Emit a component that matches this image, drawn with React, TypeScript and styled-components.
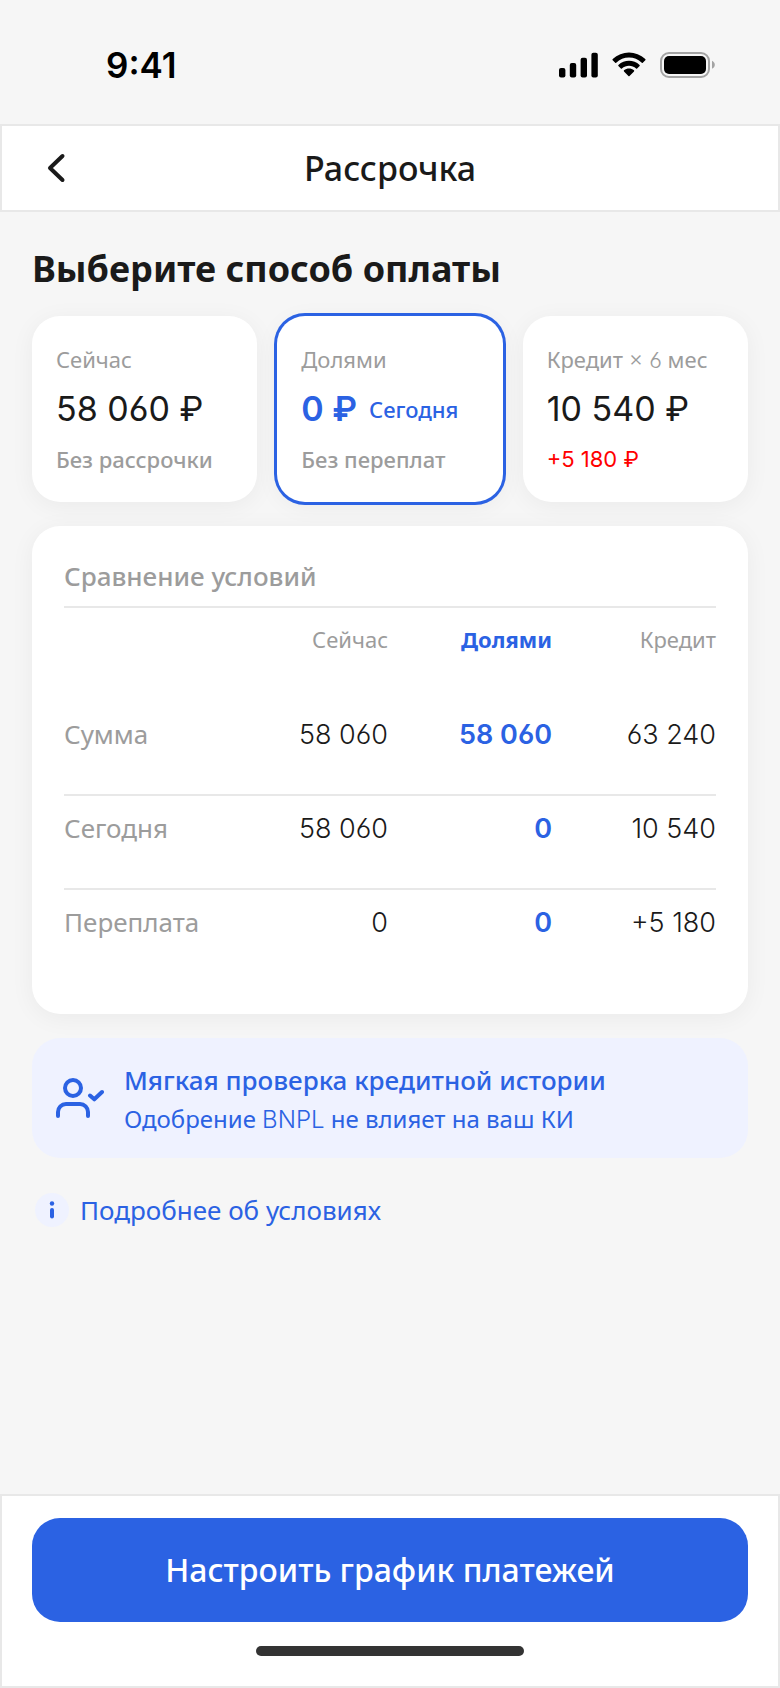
import React, { useState } from 'react';
import styled, { createGlobalStyle } from 'styled-components';

const color = {
  page: '#f6f6f6',
  surface: '#ffffff',
  line: '#e8e8e8',
  text: '#1a1a1a',
  muted: '#9c9c9c',
  accent: '#2b62e3',
  accentSoft: '#eff2ff',
  danger: '#ff0000',
};

const textFont = "'Noto Sans', 'Open Sans', sans-serif";
const numberFont = "Inter, 'Noto Sans', sans-serif";

const GlobalStyle = createGlobalStyle`
  * { box-sizing: border-box; }
  body {
    margin: 0;
    background: ${color.page};
    color: ${color.text};
    font-family: ${textFont};
  }
`;

const Screen = styled.div`
  display: flex;
  flex-direction: column;
  min-height: 100vh;
`;

const StatusBar = styled.div`
  display: flex;
  align-items: center;
  justify-content: space-between;
  padding: 44px 64px 38px 106px;
  color: #000;
`;

const Clock = styled.time`
  font: 600 35px/42px ${numberFont};
`;

const StatusIcons = styled.div`
  display: flex;
  align-items: center;
  gap: 14px;

  svg { display: block; }
`;

const Header = styled.header`
  display: grid;
  grid-template-columns: 48px 1fr 48px;
  align-items: center;
  height: 88px;
  padding: 0 30px;
  background: ${color.surface};
  border: 2px solid ${color.line};
`;

const BackButton = styled.button`
  display: flex;
  align-items: center;
  justify-content: center;
  width: 48px;
  height: 48px;
  padding: 0;
  border: 0;
  background: none;
  color: ${color.text};
  cursor: pointer;
`;

const Title = styled.h1`
  margin: 0;
  font-size: 34px;
  line-height: 48px;
  font-weight: 500;
  text-align: center;
`;

const Content = styled.main`
  flex: 1;
  display: flex;
  flex-direction: column;
  gap: 24px;
  padding: 32px;
`;

const PlanSection = styled.section`
  display: flex;
  flex-direction: column;
  gap: 22px;
`;

const SectionTitle = styled.h2`
  margin: 0;
  font-size: 36px;
  line-height: 50px;
  font-weight: 700;
`;

const Options = styled.div`
  display: grid;
  grid-template-columns: repeat(3, minmax(0, 1fr));
  gap: 20px;
`;

const OptionCard = styled.label<{ $selected: boolean }>`
  display: flex;
  flex-direction: column;
  gap: 12px;
  padding: 28px 24px;
  border-radius: 28px;
  background: ${color.surface};
  box-shadow: ${(p) => (p.$selected ? `0 0 0 3px ${color.accent}, ` : '')}0 4px 24px rgba(0, 0, 0, 0.05);
  white-space: nowrap;
  cursor: pointer;
`;

const HiddenRadio = styled.input`
  position: absolute;
  opacity: 0;
  pointer-events: none;
`;

const OptionName = styled.span`
  font-size: 22px;
  line-height: 30px;
  color: ${color.muted};
`;

const OptionPrice = styled.span<{ $selected: boolean }>`
  display: flex;
  align-items: center;
  gap: 12px;
  font: ${(p) => (p.$selected ? 600 : 400)} 34px/46px ${numberFont};
  font-feature-settings: 'cv03';
  color: ${(p) => (p.$selected ? color.accent : color.text)};
`;

const PriceTag = styled.span`
  font: 500 22px/30px ${textFont};
`;

const OptionNote = styled.span<{ $extra?: boolean }>`
  font: ${(p) => (p.$extra ? `400 22px/30px ${numberFont}` : `500 22px/30px ${textFont}`)};
  color: ${(p) => (p.$extra ? color.danger : color.muted)};
`;

const CompareCard = styled.section`
  padding: 32px 32px 30px;
  border-radius: 28px;
  background: ${color.surface};
  box-shadow: 0 4px 24px rgba(0, 0, 0, 0.05);
`;

const CompareTitle = styled.h3`
  margin: 0;
  padding-bottom: 12px;
  border-bottom: 2px solid ${color.line};
  font-size: 26px;
  line-height: 36px;
  font-weight: 500;
  color: ${color.muted};
`;

const Table = styled.table`
  width: 100%;
  table-layout: fixed;
  border-collapse: separate;
  border-spacing: 0;
`;

const Row = styled.tr<{ $divided?: boolean }>`
  > * {
    height: 94px;
    padding: 14px 0 0;
    vertical-align: top;
    border-bottom: ${(p) => (p.$divided ? `2px solid ${color.line}` : '0')};
  }
`;

const ColumnHead = styled.th<{ $selected: boolean }>`
  width: 164px;
  font-size: 22px;
  line-height: 34px;
  font-weight: ${(p) => (p.$selected ? 700 : 400)};
  color: ${(p) => (p.$selected ? color.accent : color.muted)};
  text-align: right;
`;

const RowHead = styled.th`
  font-size: 26px;
  line-height: 36px;
  font-weight: 400;
  color: ${color.muted};
  text-align: left;
`;

const Value = styled.td<{ $selected: boolean }>`
  font: ${(p) => (p.$selected ? 600 : 300)} 27px/38px ${numberFont};
  font-feature-settings: 'cv03';
  color: ${(p) => (p.$selected ? color.accent : color.text)};
  text-align: right;
`;

const Banner = styled.section`
  display: flex;
  align-items: center;
  gap: 20px;
  padding: 23px 24px 19px;
  border-radius: 28px;
  background: ${color.accentSoft};
  color: ${color.accent};

  svg { flex: none; }
`;

const BannerTitle = styled.p`
  margin: 0;
  font-size: 26px;
  line-height: 38px;
  font-weight: 500;
`;

const BannerText = styled.p`
  margin: 0;
  font-size: 24px;
  line-height: 40px;
`;

const Latin = styled.span`
  font-family: ${numberFont};
  font-weight: 300;
  font-feature-settings: 'cv03';
  line-height: 1;
`;

const DetailsLink = styled.a`
  display: flex;
  align-items: center;
  align-self: flex-start;
  gap: 8px;
  margin-top: 8px;
  font-size: 26px;
  line-height: 40px;
  color: ${color.accent};
  text-decoration: none;
`;

const Footer = styled.footer`
  display: flex;
  flex-direction: column;
  align-items: center;
  gap: 24px;
  padding: 22px 30px 30px;
  background: ${color.surface};
  border: 2px solid ${color.line};
`;

const PrimaryButton = styled.button`
  width: 100%;
  height: 104px;
  border: 0;
  border-radius: 28px;
  background: ${color.accent};
  color: #fff;
  font: 500 32px/44px ${textFont};
  cursor: pointer;
`;

const HomeIndicator = styled.div`
  width: 268px;
  height: 10px;
  border-radius: 5px;
  background: #333;
`;

const SignalIcon = () => (
  <svg width="39" height="26" viewBox="0 0 39 26" fill="currentColor" aria-hidden="true">
    <rect x="0" y="16" width="6.4" height="9.4" rx="2" />
    <rect x="10.8" y="11" width="6.4" height="14.4" rx="2" />
    <rect x="21.6" y="5.8" width="6.4" height="19.6" rx="2" />
    <rect x="32.4" y="0.8" width="6.4" height="24.6" rx="2" />
  </svg>
);

const WifiIcon = () => (
  <svg width="34" height="26" viewBox="0 0 34 26" fill="currentColor" aria-hidden="true">
    <path d="M17 5.6c4.8 0 9.3 1.8 12.8 5.1.3.3.7.3 1 0l2.5-2.5c.3-.3.3-.8 0-1.1C24.2-1.6 9.8-1.6.7 7.1c-.3.3-.3.8 0 1.1l2.5 2.5c.3.3.7.3 1 0C7.7 7.4 12.2 5.6 17 5.6z" />
    <path d="M17 13.8c2.6 0 5.1 1 7.1 2.8.3.3.7.3 1 0l2.5-2.6c.3-.3.3-.8 0-1.1-6-5.6-15.2-5.6-21.2 0-.3.3-.3.8 0 1.1l2.5 2.6c.3.3.7.3 1 0 2-1.8 4.5-2.8 7.1-2.8z" />
    <path d="M22 19.4c.3-.3.3-.8 0-1.1-2.9-2.5-7.1-2.5-10 0-.3.3-.3.8 0 1.1l4.4 4.5c.3.3.8.3 1.1 0z" />
  </svg>
);

const BatteryIcon = () => (
  <svg width="56" height="26" viewBox="0 0 56 26" aria-hidden="true">
    <rect x="1" y="1" width="48" height="24" rx="8" fill="none" stroke="#a3a3a3" strokeWidth="2" />
    <rect x="4" y="4" width="42" height="18" rx="5" fill="currentColor" />
    <path d="M52 8.8v8c1.7-.7 2.8-2.3 2.8-4s-1.1-3.3-2.8-4z" fill="#a3a3a3" />
  </svg>
);

const ChevronIcon = () => (
  <svg width="48" height="48" viewBox="0 0 48 48" fill="none" stroke="currentColor" strokeWidth="4" strokeLinecap="round" strokeLinejoin="round" aria-hidden="true">
    <path d="M30.5 12L18 24l12.5 12" />
  </svg>
);

const UserCheckIcon = () => (
  <svg width="48" height="48" viewBox="0 0 48 48" fill="none" stroke="currentColor" strokeWidth="4" strokeLinecap="round" strokeLinejoin="round" aria-hidden="true">
    <circle cx="17" cy="12" r="8" />
    <path d="M2 40v-4a8 8 0 0 1 8-8h14a8 8 0 0 1 8 8v4" />
    <path d="M34 19.5l4.3 3.8L46 16" />
  </svg>
);

const InfoIcon = () => (
  <svg width="40" height="40" viewBox="0 0 40 40" aria-hidden="true">
    <circle cx="20" cy="20" r="17" fill={color.accentSoft} />
    <circle cx="20" cy="13.5" r="2.2" fill={color.accent} />
    <path d="M20 20v6.5" stroke={color.accent} strokeWidth="4" strokeLinecap="round" />
  </svg>
);

type Plan = {
  id: string;
  name: React.ReactNode;
  column: string;
  price: string;
  tag?: string;
  note: string;
  extra?: boolean;
};

const plans: Plan[] = [
  { id: 'now', name: 'Сейчас', column: 'Сейчас', price: '58 060 ₽', note: 'Без рассрочки' },
  { id: 'parts', name: 'Долями', column: 'Долями', price: '0 ₽', tag: 'Сегодня', note: 'Без переплат' },
  { id: 'credit', name: <>Кредит <Latin>× 6</Latin> мес</>, column: 'Кредит', price: '10 540 ₽', note: '+5 180 ₽', extra: true },
];

const rows = [
  { label: 'Сумма', values: ['58 060', '58 060', '63 240'] },
  { label: 'Сегодня', values: ['58 060', '0', '10 540'] },
  { label: 'Переплата', values: ['0', '0', '+5 180'] },
];

export default function App() {
  const [selected, setSelected] = useState('parts');

  return (
    <Screen>
      <GlobalStyle />
      <StatusBar>
        <Clock>9:41</Clock>
        <StatusIcons>
          <SignalIcon />
          <WifiIcon />
          <BatteryIcon />
        </StatusIcons>
      </StatusBar>
      <Header>
        <BackButton type="button" aria-label="Назад">
          <ChevronIcon />
        </BackButton>
        <Title>Рассрочка</Title>
      </Header>
      <Content>
        <PlanSection>
          <SectionTitle id="plans-title">Выберите способ оплаты</SectionTitle>
          <Options role="radiogroup" aria-labelledby="plans-title">
            {plans.map((plan) => (
              <OptionCard key={plan.id} htmlFor={plan.id} $selected={plan.id === selected}>
                <HiddenRadio
                  type="radio"
                  name="plan"
                  id={plan.id}
                  checked={plan.id === selected}
                  onChange={() => setSelected(plan.id)}
                />
                <OptionName>{plan.name}</OptionName>
                <OptionPrice $selected={plan.id === selected}>
                  {plan.price}
                  {plan.tag && <PriceTag>{plan.tag}</PriceTag>}
                </OptionPrice>
                <OptionNote $extra={plan.extra}>{plan.note}</OptionNote>
              </OptionCard>
            ))}
          </Options>
        </PlanSection>
        <CompareCard>
          <CompareTitle id="compare-title">Сравнение условий</CompareTitle>
          <Table aria-labelledby="compare-title">
            <thead>
              <Row>
                <td />
                {plans.map((plan) => (
                  <ColumnHead key={plan.id} scope="col" $selected={plan.id === selected}>
                    {plan.column}
                  </ColumnHead>
                ))}
              </Row>
            </thead>
            <tbody>
              {rows.map((row, index) => (
                <Row key={row.label} $divided={index < rows.length - 1}>
                  <RowHead scope="row">{row.label}</RowHead>
                  {row.values.map((value, column) => (
                    <Value key={plans[column].id} $selected={plans[column].id === selected}>
                      {value}
                    </Value>
                  ))}
                </Row>
              ))}
            </tbody>
          </Table>
        </CompareCard>
        <Banner>
          <UserCheckIcon />
          <div>
            <BannerTitle>Мягкая проверка кредитной истории</BannerTitle>
            <BannerText>
              Одобрение <Latin>BNPL</Latin> не влияет на ваш КИ
            </BannerText>
          </div>
        </Banner>
        <DetailsLink href="#terms">
          <InfoIcon />
          Подробнее об условиях
        </DetailsLink>
      </Content>
      <Footer>
        <PrimaryButton type="button">Настроить график платежей</PrimaryButton>
        <HomeIndicator />
      </Footer>
    </Screen>
  );
}
